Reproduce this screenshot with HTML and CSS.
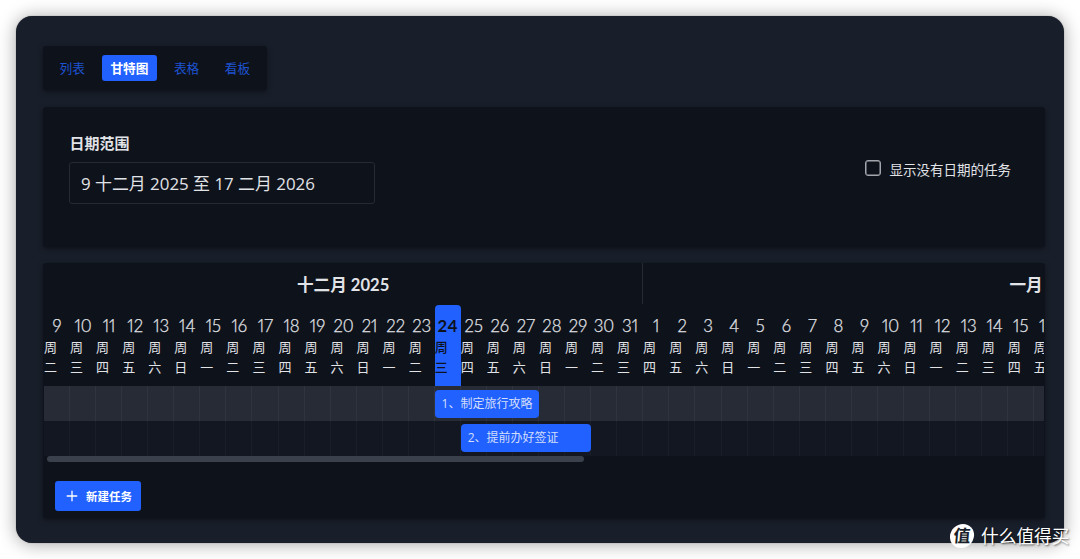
FILE: index.html
```html
<!doctype html>
<html lang="zh-CN">
<head>
  <meta charset="UTF-8" />
  <meta name="viewport" content="width=device-width, initial-scale=1" />
  <title>甘特图</title>
  <link rel="stylesheet" href="styles.css">
</head>
<body>
  <div id="window">
    <nav class="card tabs">
      <a href="#">列表</a>
      <a href="#" class="active">甘特图</a>
      <a href="#">表格</a>
      <a href="#">看板</a>
    </nav>

    <div class="card filters">
      <div class="range">
        <label for="range">日期范围</label>
        <input id="range" type="text" value="9 十二月 2025 至 17 二月 2026" readonly>
      </div>
      <label class="check"><input type="checkbox"><span>显示没有日期的任务</span></label>
    </div>

    <div class="card gantt">
      <div class="gantt-scroll">
        <div class="months">
          <div class="month december">十二月 2025</div>
          <div class="month january">一月 2026</div>
        </div>
        <div id="days"></div>
        <div class="row odd"><div class="bar first">1、制定旅行攻略</div></div>
        <div class="row"><div class="bar second">2、提前办好签证</div></div>
      </div>
      <div class="scrollbar"></div>
      <button class="new-task">
        <svg viewBox="0 0 12 12" width="12" height="12"><path d="M6 1.2v9.6M1.2 6h9.6" /></svg>
        <span>新建任务</span>
      </button>
    </div>
  </div>

  <div id="watermark"><span class="logo">值</span><span>什么值得买</span></div>

  <script src="gantt.js"></script>
</body>
</html>
```

FILE: styles.css
```css
* {
  box-sizing: border-box;
}
body {
  margin: 0;
  padding: 16px;
  height: 559px;
  overflow: hidden;
  background: #fff;
  color: #e1e3e7;
  font-family: "Open Sans", "Noto Sans CJK SC", sans-serif;
}
#window {
  height: 527px;
  padding: 30px 19px 0 27px;
  background: #191f2a;
  border-radius: 16px;
  box-shadow: 0 0 1px rgba(0, 0, 0, 0.5), 0 1px 18px rgba(0, 0, 0, 0.36);
}
.card {
  background: #0e121b;
  border-radius: 3px;
  box-shadow: 0 2px 5px rgba(8, 10, 16, 0.65);
}

/* view tabs */
.tabs {
  display: flex;
  width: 224px;
  height: 44px;
  padding: 9px 8px;
  gap: 8.5px;
}
.tabs a {
  height: 26px;
  padding: 0 8.5px;
  border-radius: 3px;
  color: #1d52d1;
  font-size: 12.7px;
  line-height: 27px;
  text-decoration: none;
  white-space: nowrap;
}
.tabs a.active {
  background: #2161ff;
  color: #fff;
  font-weight: 700;
}

/* date filters */
.filters {
  display: flex;
  justify-content: space-between;
  height: 140px;
  margin-top: 17px;
  padding: 26px 34px 0 26px;
}
.range label {
  display: block;
  height: 29px;
  padding-left: 0.5px;
  font-size: 15px;
  font-weight: 700;
  line-height: 21px;
}
.range input {
  display: block;
  width: 306px;
  height: 42px;
  padding: 0 11px 1px;
  background: transparent;
  border: 1px solid #252a34;
  border-radius: 3px;
  color: #e1e3e7;
  font-family: inherit;
  font-size: 16.9px;
  outline: none;
}
.check {
  display: flex;
  height: 24px;
  margin-top: 25px;
  gap: 9px;
  font-size: 13.5px;
  line-height: 24px;
}
.check input {
  appearance: none;
  width: 16px;
  height: 16px;
  margin: 2px 0 0;
  border: 1px solid #a3a6ac;
  border-radius: 3px;
  box-shadow: inset 0 0 0 0.5px #a3a6ac;
}

/* gantt chart */
.gantt {
  height: 255px;
  margin-top: 16px;
}
.gantt-scroll {
  --day: 26.06px;
  width: 1000px;
  height: 193px;
  margin-left: 1px;
  overflow: hidden;
}
.months {
  display: flex;
  height: 42px;
}
.month {
  flex: none;
  height: 41px;
  padding-top: 10px;
  font-family: Lato, "Noto Sans CJK SC", sans-serif;
  font-size: 16.6px;
  font-weight: 700;
  line-height: 24px;
  text-align: center;
}
.december {
  width: calc(var(--day) * 23);
  border-right: 1px solid #252a34;
}
.january {
  width: calc(var(--day) * 31);
}
#days {
  display: flex;
  height: 81px;
}
.day {
  flex: none;
  width: var(--day);
  padding-top: 10px;
  font-size: 13px;
  line-height: 20px;
}
.day b {
  display: block;
  height: 22px;
  font-family: Lato, sans-serif;
  font-feature-settings: "pnum";
  font-size: 16.8px;
  font-weight: 300;
  line-height: 22px;
  text-align: center;
  -webkit-text-stroke: 0.25px;
}
.day span {
  display: block;
  width: 13px;
}
.day.today {
  background: #2161ff;
  border-radius: 4px 4px 0 0;
  color: #0e121b;
}
.day.today b {
  font-weight: 700;
  letter-spacing: 0.5px;
  -webkit-text-stroke: 0;
}
.day.today span {
  font-weight: 500;
}
.row {
  height: 35px;
  padding-top: 3px;
  background: repeating-linear-gradient(90deg, transparent 0 25.06px, #191e28 25.06px 26.06px) #131721;
}
.row.odd {
  padding-top: 4px;
  background: repeating-linear-gradient(90deg, transparent 0 25.06px, #30343e 25.06px 26.06px) #272b35;
}
.bar {
  height: 28px;
  padding-left: 7px;
  background: #2161ff;
  border-radius: 4px;
  color: #d3dffa;
  font-size: 12px;
  line-height: 27px;
}
.bar.first {
  width: calc(var(--day) * 4);
  margin-left: calc(var(--day) * 15 - 0.3px);
}
.bar.second {
  width: calc(var(--day) * 5);
  margin-left: calc(var(--day) * 16 - 0.3px);
}
.scrollbar {
  width: 537px;
  height: 6px;
  margin-left: 4px;
  background: #3b414c;
  border-radius: 3px;
}
.new-task {
  display: flex;
  align-items: center;
  width: 86px;
  height: 30px;
  margin: 19px 0 0 12px;
  padding: 0 0 0 11px;
  gap: 8px;
  background: #2161ff;
  border: 0;
  border-radius: 3px;
  color: #fff;
  font-family: inherit;
  font-size: 11.5px;
  font-weight: 700;
}
.new-task svg {
  fill: none;
  stroke: #fff;
  stroke-width: 1.3;
  stroke-linecap: round;
}

#watermark {
  position: absolute;
  left: 950px;
  top: 523px;
  display: flex;
  align-items: center;
  gap: 7px;
  color: #fff;
  font-size: 17.7px;
  line-height: 26px;
  white-space: nowrap;
  text-shadow: 1px 1px 2px rgba(0, 0, 0, 0.6);
}
#watermark .logo {
  width: 24px;
  height: 24px;
  background: #fff;
  border-radius: 50%;
  color: #191f2a;
  font-size: 17px;
  font-weight: 700;
  line-height: 23px;
  text-align: center;
  text-shadow: none;
  transform: skewX(-5deg);
}
```

FILE: gantt.js
```js
const week = ['日', '一', '二', '三', '四', '五', '六'];
const days = document.getElementById('days');

// 9 December 2025 up to the edge of the visible area
for (let i = 0; i < 39; i++) {
  const date = new Date(2025, 11, 9 + i);
  const day = document.createElement('div');
  day.className = i === 15 ? 'day today' : 'day';
  day.innerHTML = `<b>${date.getDate()}</b><span>周${week[date.getDay()]}</span>`;
  days.appendChild(day);
}
```
